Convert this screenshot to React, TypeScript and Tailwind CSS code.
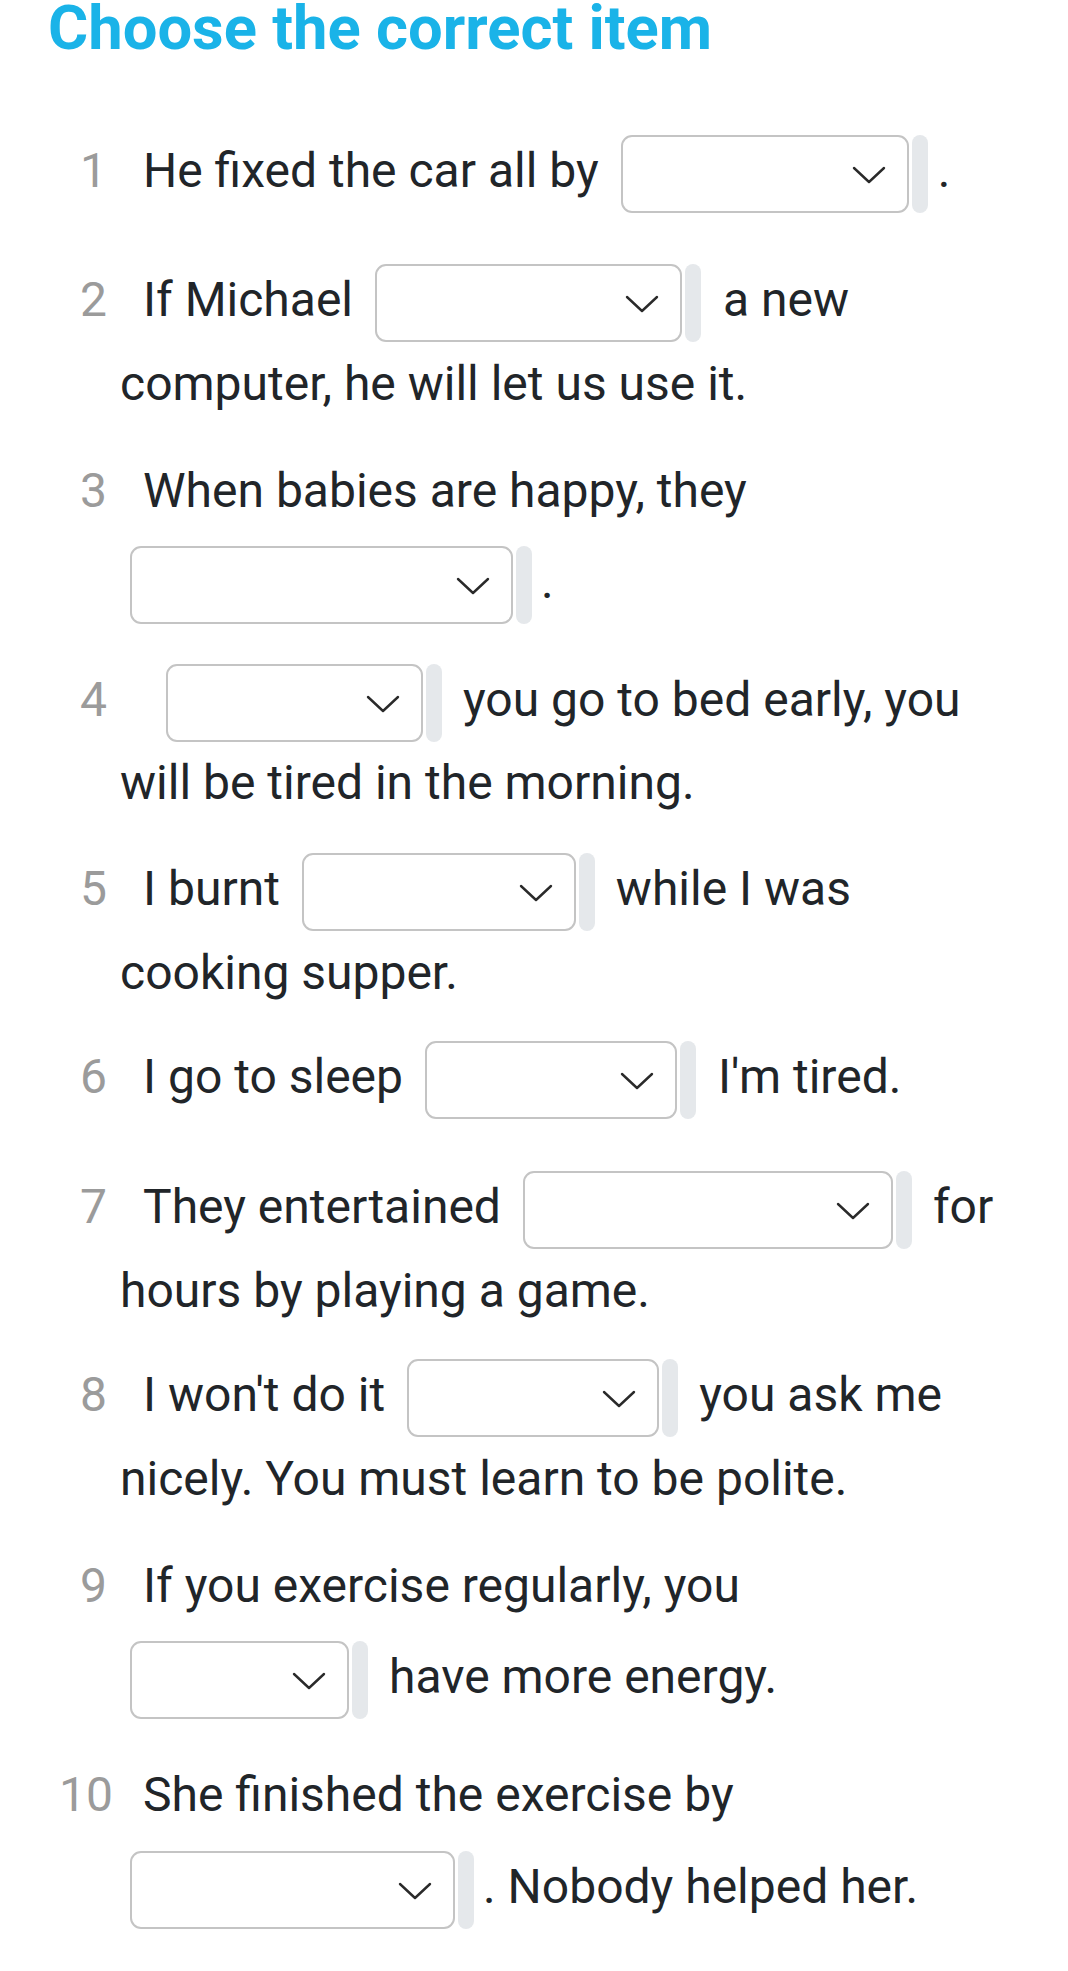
import React from "react";

const Chevron = () => (
  <svg width="34" height="18" viewBox="0 0 34 18" className="block">
    <polyline points="2,2 17,16 32,2" fill="none" stroke="#2a2a2a" strokeWidth="2.4" strokeLinecap="round" strokeLinejoin="round" />
  </svg>
);

function Sel({ wClass, mClass }: { wClass: string; mClass: string }) {
  return (
    <div className={`flex shrink-0 items-stretch h-[78px] ${mClass}`}>
      <div className={`flex items-center justify-end h-[78px] rounded-[11px] border-2 border-[#c4c4c4] bg-white pr-[21px] pt-[2px] ${wClass}`}>
        <Chevron />
      </div>
      <div className="ml-[3px] w-[16px] h-[78px] rounded-[8px] bg-[#e5e8eb]" />
    </div>
  );
}

function T({ children }: { children: React.ReactNode }) {
  return <span className="mt-[8px] leading-[56px] whitespace-nowrap">{children}</span>;
}

function Num({ n, sel }: { n: string; sel?: boolean }) {
  return (
    <span className={`w-[48px] mr-[36px] shrink-0 text-right text-[#9b9b9b] leading-[56px] ${sel ? "mt-[8px]" : ""}`}>
      {n}
    </span>
  );
}

function SelLine({ children, className = "" }: { children: React.ReactNode; className?: string }) {
  return <div className={`flex items-start h-[78px] ${className}`}>{children}</div>;
}

function TextLine({ children, className = "" }: { children: React.ReactNode; className?: string }) {
  return <div className={`flex items-start h-[56px] leading-[56px] whitespace-nowrap ${className}`}>{children}</div>;
}

export default function App() {
  return (
    <div
      className="w-[1068px] min-h-[1971px] bg-white text-[#212529] text-[48px]"
      style={{ fontFamily: "Roboto, 'Noto Sans', sans-serif" }}
    >
      <h1 className="pl-[48px] h-[56px] leading-[56px] text-[61.5px] font-bold text-[#1ab3e8] whitespace-nowrap">
        Choose the correct item
      </h1>

      <div className="pl-[59px]">
        {/* 1 */}
        <SelLine className="mt-[79px]">
          <Num n="1" sel />
          <T>He fixed the car all by</T>
          <Sel wClass="w-[288px]" mClass="ml-[22px] mr-[10px]" />
          <T>.</T>
        </SelLine>

        {/* 2 */}
        <SelLine className="mt-[51px]">
          <Num n="2" sel />
          <T>If Michael</T>
          <Sel wClass="w-[307px]" mClass="ml-[22px] mr-[22px]" />
          <T>a new</T>
        </SelLine>
        <TextLine className="mt-[14px] pl-[61px]">computer, he will let us use it.</TextLine>

        {/* 3 */}
        <TextLine className="mt-[51px]">
          <Num n="3" />
          <span>When babies are happy, they</span>
        </TextLine>
        <SelLine className="mt-[27px] pl-[62px]">
          <Sel wClass="w-[383px]" mClass="ml-[9px] mr-[9px]" />
          <T>.</T>
        </SelLine>

        {/* 4 */}
        <SelLine className="mt-[40px]">
          <Num n="4" sel />
          <Sel wClass="w-[257px]" mClass="ml-[23px] mr-[21px]" />
          <T>you go to bed early, you</T>
        </SelLine>
        <TextLine className="mt-[13px] pl-[61px]">will be tired in the morning.</TextLine>

        {/* 5 */}
        <SelLine className="mt-[42px]">
          <Num n="5" sel />
          <T>I burnt</T>
          <Sel wClass="w-[274px]" mClass="ml-[22px] mr-[21px]" />
          <T>while I was</T>
        </SelLine>
        <TextLine className="mt-[14px] pl-[61px]">cooking supper.</TextLine>

        {/* 6 */}
        <SelLine className="mt-[40px]">
          <Num n="6" sel />
          <T>I go to sleep</T>
          <Sel wClass="w-[252px]" mClass="ml-[22px] mr-[22px]" />
          <T>I'm tired.</T>
        </SelLine>

        {/* 7 */}
        <SelLine className="mt-[52px]">
          <Num n="7" sel />
          <T>They entertained</T>
          <Sel wClass="w-[370px]" mClass="ml-[22px] mr-[21px]" />
          <T>for</T>
        </SelLine>
        <TextLine className="mt-[14px] pl-[61px]">hours by playing a game.</TextLine>

        {/* 8 */}
        <SelLine className="mt-[40px]">
          <Num n="8" sel />
          <T>I won't do it</T>
          <Sel wClass="w-[252px]" mClass="ml-[22px] mr-[21px]" />
          <T>you ask me</T>
        </SelLine>
        <TextLine className="mt-[14px] pl-[61px]">nicely. You must learn to be polite.</TextLine>

        {/* 9 */}
        <TextLine className="mt-[51px]">
          <Num n="9" />
          <span>If you exercise regularly, you</span>
        </TextLine>
        <SelLine className="mt-[27px] pl-[62px]">
          <Sel wClass="w-[219px]" mClass="ml-[9px] mr-[21px]" />
          <T>have more energy.</T>
        </SelLine>

        {/* 10 */}
        <TextLine className="mt-[48px]">
          <Num n="10" />
          <span>She finished the exercise by</span>
        </TextLine>
        <SelLine className="mt-[28px] pl-[62px]">
          <Sel wClass="w-[325px]" mClass="ml-[9px] mr-[9px]" />
          <T>. Nobody helped her.</T>
        </SelLine>
      </div>
    </div>
  );
}
